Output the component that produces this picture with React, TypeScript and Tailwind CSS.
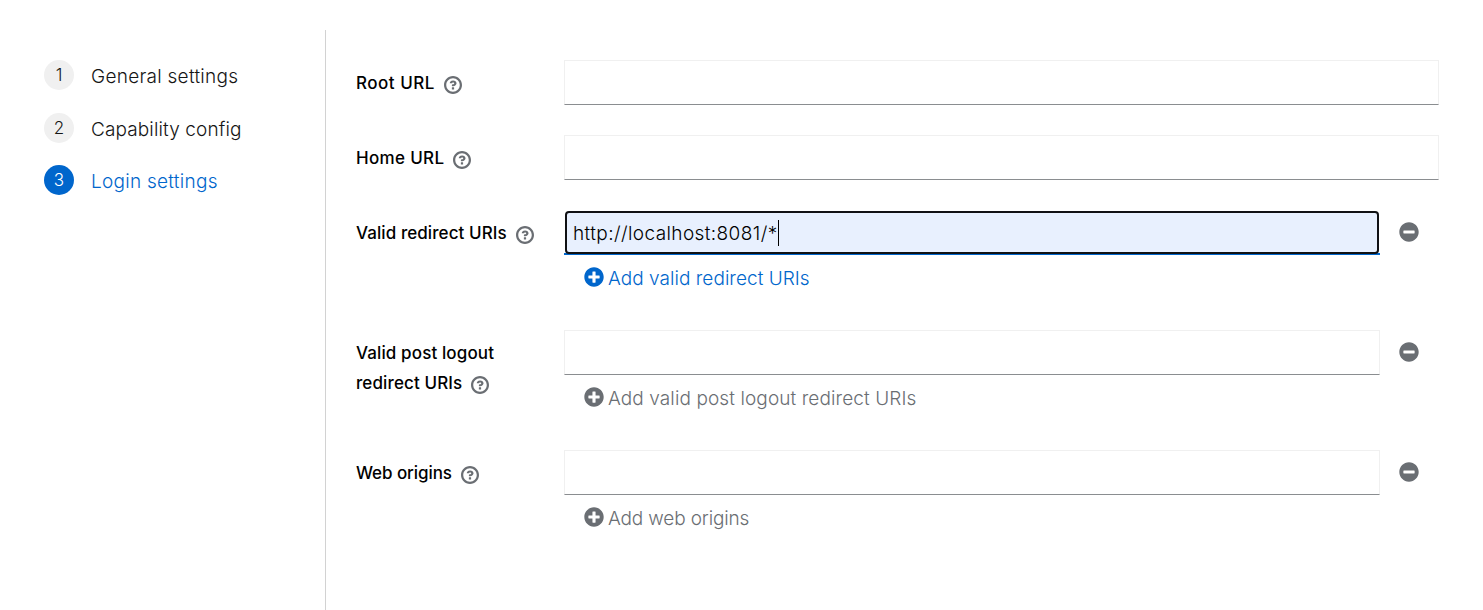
import React from "react";
import { FaMinusCircle, FaPlusCircle } from "react-icons/fa";

function HelpIcon() {
  return (
    <svg viewBox="0 0 1024 1024" fill="currentColor" className="ml-[9px] inline-block size-[18px] align-[-5px] text-[#6a6e73]">
      <path d="M521.3 576C627.5 576 713.7 502 713.7 413.7S627.6 253.6 521.3 253.6C366 253.6 334.5 337.7 329.2 407.2C329.2 414.3 335.2 416 343.5 416H445C450.5 416 458 415.5 460.8 406.5C460.8 362.6 582.9 357.1 582.9 413.6C582.9 441.9 556.2 470.9 521.3 473S447.3 479.8 447.3 521.7V553.8C447.3 570.8 456.1 576 472 576ZM575.3 751.3V655.3Q575.3 639.2 559.3 639.2H463.3Q447.2 639.2 447.2 655.2V751.2Q447.2 767.3 463.2 767.3H559.2Q575.3 767.3 575.3 751.3ZM512 0C229.2 0 0 229.2 0 512S229.2 1024 512 1024 1024 794.8 1024 512 794.8 0 512 0ZM512 896C300.2 896 128 723.9 128 512S300.2 128 512 128 896 300.1 896 512 723.8 896 512 896Z" />
    </svg>
  );
}

type StepProps = { index: number; name: string; current?: boolean; spacing: string };

function Step({ index, name, current, spacing }: StepProps) {
  return (
    <li className="flex h-[30px] items-center">
      <span
        className={`flex size-[30px] shrink-0 justify-center rounded-full text-[17px] leading-[30px] ${
          current ? "bg-[#0066cc] text-white" : "bg-[#f0f0f0] text-[#151515]"
        }`}
      >
        {index}
      </span>
      <span className={`ml-[17px] pt-[4px] text-[19px] leading-[28px] whitespace-nowrap ${spacing} ${current ? "text-[#0066cc]" : "text-[#151515]"}`}>
        {name}
      </span>
    </li>
  );
}

type FieldProps = {
  label: React.ReactNode;
  labelSpacing: string;
  value?: string;
  addText?: string;
  addSpacing?: string;
  active?: boolean;
};

function Field({ label, labelSpacing, value, addText, addSpacing = "", active }: FieldProps) {
  return (
    <div className="flex">
      <div className={`w-[208px] shrink-0 pt-[8px] text-[17px] leading-[30px] font-medium whitespace-nowrap text-black ${labelSpacing}`}>
        {label}
        <HelpIcon />
      </div>
      <div className="min-w-0 flex-1">
        <div className="flex">
          {active ? (
            <div className="h-[45px] flex-1 border-b-2 border-[#0066cc] px-px pt-px">
              <div className="flex h-[43px] items-center rounded-[4px] border-2 border-[#101114] bg-[#e8f0fe] pl-[6px] text-[19px] text-black">
                <span className="pt-[3px] tracking-[0.4px] whitespace-nowrap">{value}</span>
                <span className="mt-px h-[26px] w-px bg-black" />
              </div>
            </div>
          ) : (
            <div className="h-[45px] flex-1 border border-[#f0f0f0] border-b-[#8a8d90] bg-white" />
          )}
          {addText && (
            <button className="flex h-[44px] w-[59px] items-center pl-[19px] text-[#6a6e73]">
              <FaMinusCircle className="size-[20px]" />
            </button>
          )}
        </div>
        {addText && (
          <button className={`ml-[20px] flex h-[45px] items-center ${active ? "text-[#0066cc]" : "text-[#6a6e73]"}`}>
            <FaPlusCircle className="mb-[2px] size-[20px]" />
            <span className={`ml-[4px] pt-[2px] text-[19px] leading-[28px] whitespace-nowrap ${addSpacing}`}>{addText}</span>
          </button>
        )}
      </div>
    </div>
  );
}

export default function App() {
  return (
    <div className="flex h-[610px] w-[1483px] overflow-hidden bg-white pt-[30px] font-['Inter',sans-serif] font-light">
      <nav className="w-[326px] shrink-0 border-r border-[#d2d2d2] pt-[30px] pl-[44px]">
        <ol className="flex flex-col gap-[22.5px]">
          <Step index={1} name="General settings" spacing="tracking-[0.27px]" />
          <Step index={2} name="Capability config" spacing="tracking-[0.12px]" />
          <Step index={3} name="Login settings" current spacing="tracking-[0.27px]" />
        </ol>
      </nav>
      <form className="flex flex-1 flex-col gap-[30px] pt-[30px] pr-[44px] pl-[30px]">
        <Field label="Root URL" labelSpacing="tracking-[0.5px]" />
        <Field label="Home URL" labelSpacing="tracking-[0.32px]" />
        <Field
          label="Valid redirect URIs"
          labelSpacing="tracking-[0.08px]"
          value="http://localhost:8081/*"
          active
          addText="Add valid redirect URIs"
          addSpacing="tracking-[0.04px]"
        />
        <Field
          label={<>Valid post logout<br />redirect URIs</>}
          labelSpacing="tracking-[0.12px]"
          addText="Add valid post logout redirect URIs"
          addSpacing="tracking-[0.1px]"
        />
        <Field label="Web origins" labelSpacing="tracking-[-0.08px]" addText="Add web origins" addSpacing="tracking-[-0.15px]" />
      </form>
    </div>
  );
}
